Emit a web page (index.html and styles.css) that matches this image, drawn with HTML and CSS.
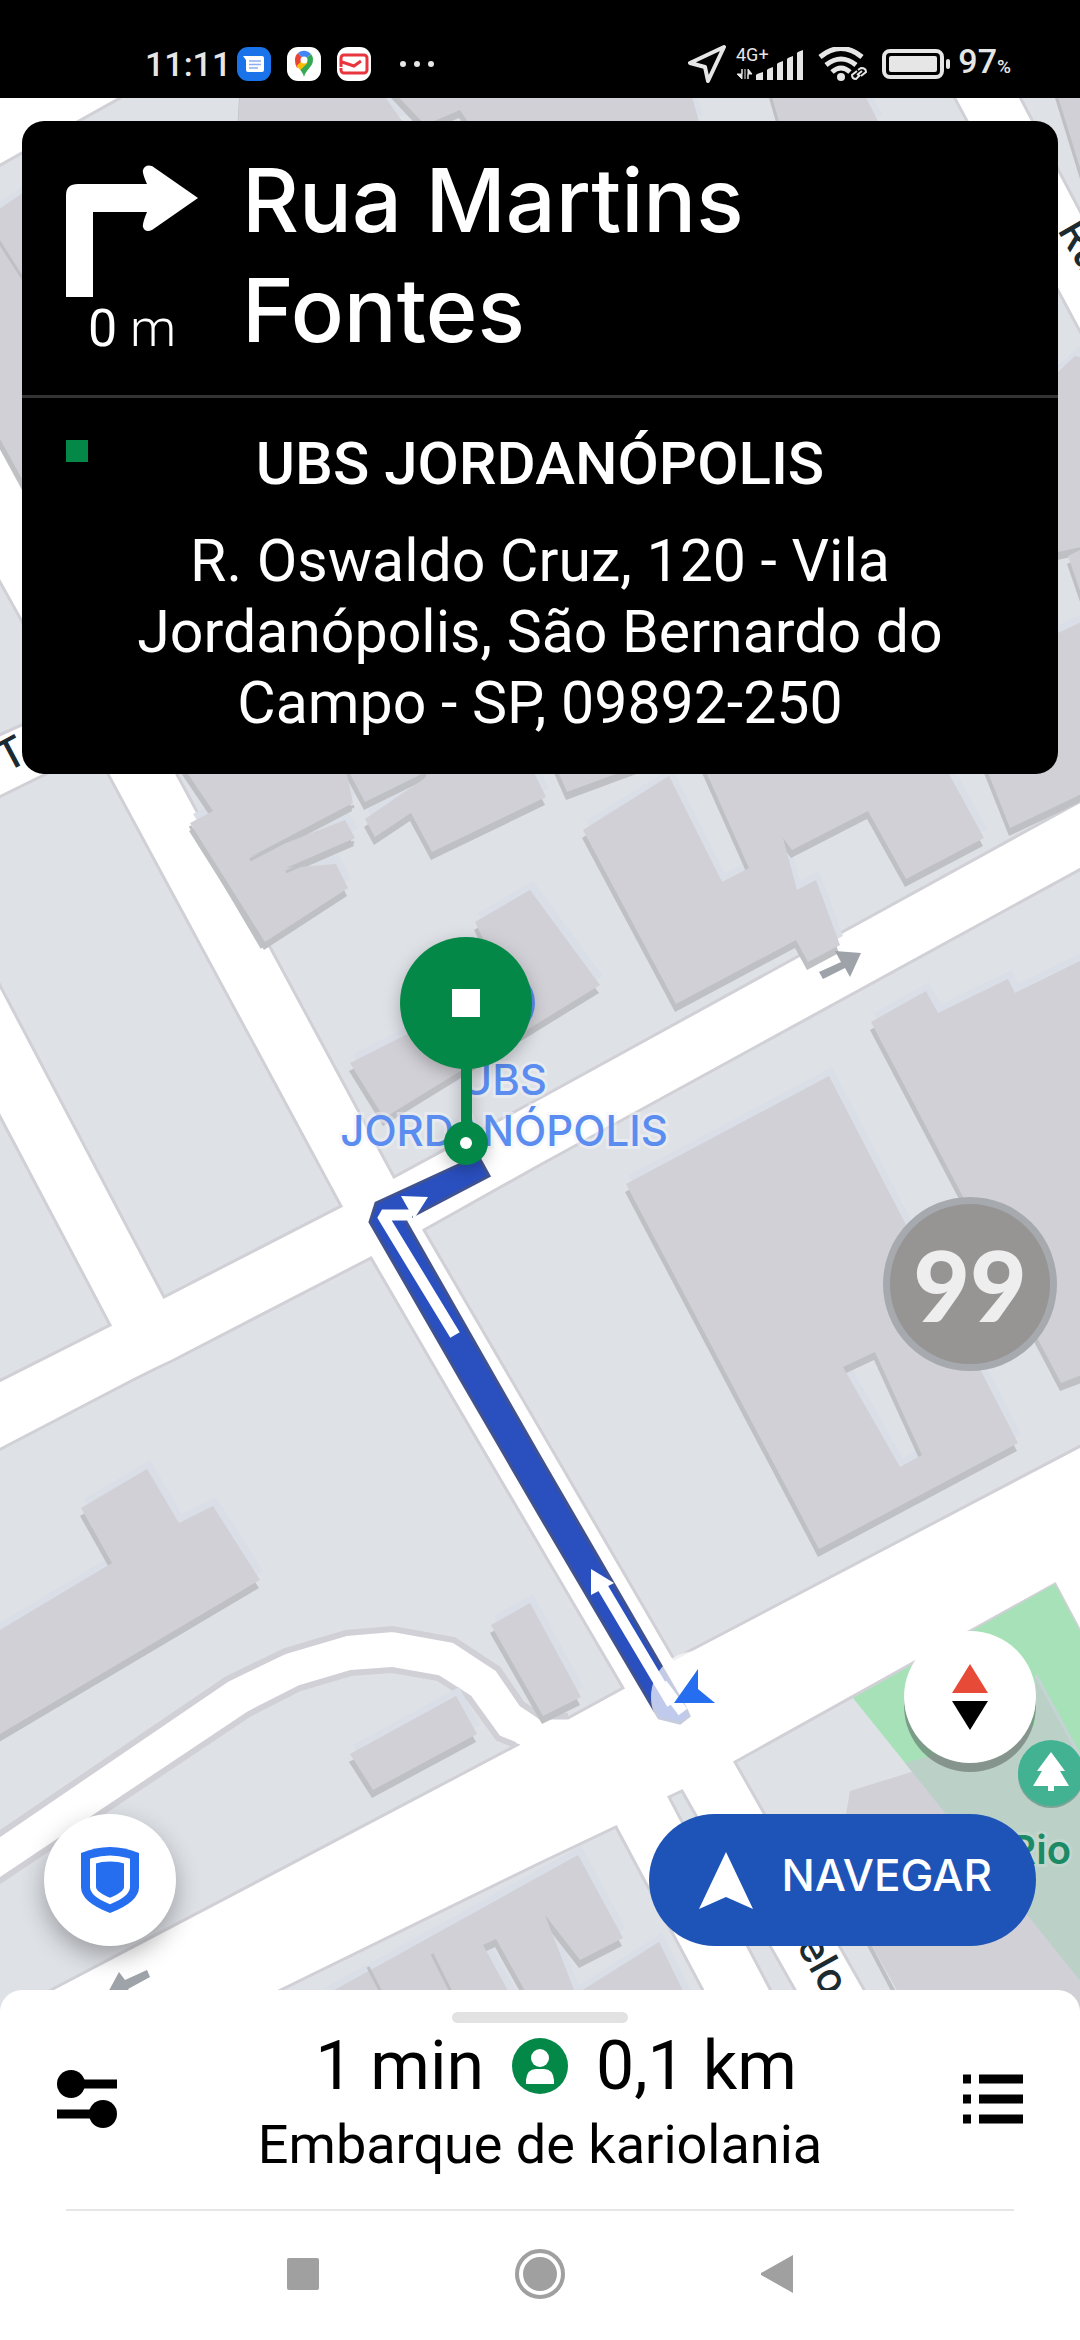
FILE: index.html
```html
<!DOCTYPE html>
<html lang="pt-BR">
<head>
    <meta charset="UTF-8">
    <meta name="viewport" content="width=device-width, initial-scale=1.0">
    <title>Navegação</title>
    <link rel="stylesheet" href="styles.css">
</head>
<body>

<header class="status-bar">
    <div class="status-group">
        <span class="clock">11:11</span>
        <svg class="app-icon" viewBox="0 0 34 34">
            <rect width="34" height="34" rx="11" fill="#1a73e8"/>
            <path d="M6 9h19a2 2 0 0 1 2 2v12a2 2 0 0 1-2 2H11a2 2 0 0 1-2-2V13z" fill="#fff"/>
            <path d="M12 14h12M12 17.500h12M12 21h9" stroke="#8ab0f0" stroke-width="1.500"/>
        </svg>
        <svg class="app-icon" viewBox="0 0 34 34">
            <rect width="34" height="34" rx="11" fill="#fff"/>
            <path d="M8 13a9 9 0 0 1 3-7l6 7-7 8a14 14 0 0 1-2-8z" fill="#ea4335"/>
            <path d="M11 6a9 9 0 0 1 13 1l-7 6z" fill="#4285f4"/>
            <path d="M24 7a9 9 0 0 1 2 6c0 7-7 9-9 17-1-4-3-6-5-9l5-8z" fill="#34a853"/>
            <path d="M9.500 19l7-7 4 4-7 7z" fill="#fbbc04"/>
            <circle cx="17" cy="13" r="3.500" fill="#fff"/>
        </svg>
        <svg class="app-icon" viewBox="0 0 34 34">
            <rect width="34" height="34" rx="11" fill="#fff"/>
            <path d="M4 20V11a3 3 0 0 1 3-3h20a3 3 0 0 1 3 3v12a3 3 0 0 1-3 3H7a3 3 0 0 1-3-3v-2M5 15l12 4 7-5" fill="none" stroke="#e8353e" stroke-width="3"/>
        </svg>
        <svg class="more-icon" viewBox="0 0 36 8">
            <circle cx="4" cy="4" r="3"/><circle cx="18" cy="4" r="3"/><circle cx="32" cy="4" r="3"/>
        </svg>
    </div>
    <div class="status-group">
        <svg class="location-icon" viewBox="0 0 38 38">
            <path d="M36 2L2 18l15 4 3 14z" fill="none" stroke="#e6e6e6" stroke-width="4" stroke-linejoin="round"/>
        </svg>
        <svg class="signal-icon" viewBox="0 0 68 34">
            <text x="0" y="14" class="network">4G+</text>
            <path d="M6 22v10l-5-5h5zM9 22v10M12 32V22l4 5h-4z" stroke="#e6e6e6"/>
            <path d="M20 33v-5q0-1 7-3v8zM31 33V23q0-1 6-3v13zM41 33V17q0-1 6-3v19zM51 33V12q0-1 6-3v24zM61 33V6q0-1 6-3v30z"/>
        </svg>
        <svg class="wifi-icon" viewBox="0 0 50 34">
            <path d="M2 10q21-17 42 0M8 18q15-12 30 0M14 25q9-8 18 0" fill="none" stroke="#e6e6e6" stroke-width="5"/>
            <circle cx="23" cy="30" r="4"/>
            <path d="M40 23l3-2q5 0 5 4l-5 4M42 28l-4 4q-4 0-4-4l5-4M39 28l5-4" fill="none" stroke="#000" stroke-width="5"/>
            <path d="M40 23l3-2q5 0 5 4l-5 4M42 28l-4 4q-4 0-4-4l5-4M39 28l5-4" fill="none" stroke="#e6e6e6" stroke-width="2"/>
        </svg>
        <svg class="battery-icon" viewBox="0 0 70 30">
            <rect x="2" y="2" width="58" height="26" rx="6" fill="none" stroke="#e6e6e6" stroke-width="4"/>
            <rect x="7" y="7" width="48" height="16" rx="2"/>
            <rect x="64" y="10" width="4" height="10" rx="2"/>
        </svg>
        <span class="battery-level">97<small>%</small></span>
    </div>
</header>

<main class="map">
    <svg class="map-canvas" viewBox="0 98 1080 1920" preserveAspectRatio="xMidYMin slice">
        <defs>
            <g id="roofs">
                <path d="M240 90L380 90 405 125 238 125zM392 90H690L700 125H470L460 110 425 125zM770 90H862L880 125H780z"/>
                <path d="M-5 212L30 188 60 300V548L-5 430z"/>
                <path d="M1056 90H1090V200z"/>
                <path d="M1040 360L1056 374 1075 356 1090 360V545L1040 556z"/>
                <path d="M1068 556L1090 545V620z"/>
                <path d="M1000 660L1090 618V780H1000z"/>
                <path d="M190 823L213 811 182 765H345L353 803 250 857 345 820 355 838 286 868 336 864 348 888 265 942z"/>
                <path d="M345 765L365 802 440 765z"/>
                <path d="M425 778L365 819 375 837 411 813 432 852 546 797 530 765H430z"/>
                <path d="M555 765L567 792 640 765z"/>
                <path d="M475 922L530 890 600 985 384 1118 350 1063 505 985z"/>
                <path d="M583 830L669 776 722 882 749 868 703 765H944L984 838 906 879 868 811 792 850 783 838 797 890 816 880 840 945 808 962 796 940 676 1004z"/>
                <path d="M985 765L1010 828 1090 790V765z"/>
                <path fill-rule="evenodd" d="M626 1184L829 1076 905 1223 1018 1443 819 1549zM843 1367L875 1352 922 1455 900 1467z"/>
                <path d="M871 1022L926 991 938 1013 1008 979 1015 993 1090 956V1372L1061 1383z"/>
                <path d="M81 1508L147 1469 179 1523 213 1506 260 1580-10 1740V1636L112 1563z"/>
                <path d="M491 1625L530 1603 581 1697 543 1716z"/>
                <path d="M350 1754L456 1696 477 1734 373 1790z"/>
                <path fill-rule="evenodd" d="M320 1998L578 1855 623 1938 580 1960 545 1915 578 2000zM483 1945L496 1939 530 2000H513z"/>
                <path d="M570 1998L659 1942 690 2005z"/>
            </g>
        </defs>

        <!-- city blocks -->
        <g class="block">
            <path d="M-5 168L120 98V80H945L1090 350V796L540 1098 394 1177-5 437z"/>
            <path d="M1011 80H1090V230z"/>
            <path d="M-5 573L68 704-5 737z"/>
            <path d="M-5 799L95 750 341 1206 164 1297-5 976z"/>
            <path d="M-5 1107L110 1325-5 1383z"/>
            <path d="M424 1230L540 1165 1090 864V1441L674 1659z"/>
            <path d="M735 1762L1055 1584 1090 1650V2030H887z"/>
            <path d="M669 1797L682 1791 815 2025H789z"/>
            <path d="M240 2010L540 1863 616 1827 715 2013z"/>
        </g>
        <path class="block" d="M-5 1452L133 1380 155 1369 172 1361 371 1258 442 1380 623 1688 568 1718H540L522 1704 498 1669 454 1640 393 1629 346 1633 285 1651 227 1679-5 1837z"/>
        <path class="block" d="M-5 1884L249 1714 300 1688 351 1673 392 1670 438 1678 469 1698 498 1738 517 1745 30 2001-5 2020z"/>
        <g class="kerb">
            <path d="M-5 1837L227 1679 285 1651 346 1633 393 1629 454 1640 498 1669 522 1704 540 1716H568"/>
            <path d="M-5 1884L249 1714 300 1688 351 1673 392 1670 438 1678 469 1698 498 1738 515 1745"/>
        </g>

        <!-- park -->
        <path d="M853 1698L1055 1584 1090 1650V1993z" fill="#a7e1b8"/>
        <path d="M850 1791L905 1774 1036 1736V1682L1090 1775V2010H908L835 1880z" fill="#d0d0d6"/>
        <path d="M905 1763L1036 1725V1675L1090 1775V1993z" fill="#bbd0c7"/>
        <path d="M1036 1675L1090 1775" stroke="#c6d3d4" stroke-width="3"/>
        <path d="M869 1945L897 1998" stroke="#bfc0c4" stroke-width="4"/>

        <!-- buildings -->
        <use href="#roofs" class="roof-lit" transform="translate(3 -9)"/>
        <use href="#roofs" class="roof-shade" transform="translate(-1 8)"/>
        <use href="#roofs" class="roof"/>
        <path d="M368 1967L384 1998M432 1954L454 1998M190 826L262 948M250 860L354 806M286 872L354 842M-2 240L30 290" fill="none" stroke="#bfc0c4" stroke-width="3"/>

        <!-- direction marks -->
        <g class="one-way">
            <path d="M819 972L841 962 835 951 861 953 850 977 845 968 823 979z"/>
            <path d="M147 1970L125 1980 119 1972 106 1996 135 1998 128 1989 150 1977z"/>
        </g>

        <!-- labels -->
        <g class="poi-label">
            <circle cx="502" cy="1003" r="33"/>
            <text x="504" y="1095">UBS</text>
            <text x="504" y="1146">JORDANÓPOLIS</text>
        </g>
        <text class="street-label" transform="translate(1057 230) rotate(60)">Rua</text>
        <text class="street-label" transform="translate(6 773) rotate(-28)">T</text>
        <text class="street-label" transform="translate(796 1945) rotate(61)">elo</text>
        <circle cx="1051" cy="1775" r="33" fill="#7fa396"/>
        <circle cx="1051" cy="1773" r="33" fill="#42b293"/>
        <path d="M1051 1752L1065 1771H1060L1069 1786H1054V1791H1048V1786H1033L1042 1771H1037z" fill="#fff"/>
        <text class="park-label" x="1071" y="1864">Rio</text>

        <!-- route -->
        <path class="route" d="M478 1156L376 1203 370 1222 461 1380 540 1516 659 1718 680 1723 689 1716 686 1709 540 1457 496 1380 405 1220 489 1176z"/>
        <path class="route-arrow" d="M455 1335L382 1215H412"/>
        <path d="M401 1196L428 1197 414 1219z" fill="#fff"/>
        <path class="route-arrow" d="M603 1588L672 1704"/>
        <path d="M591 1569L614 1583 591 1595z" fill="#fff"/>
        <circle cx="697" cy="1697" r="46" fill="#fff" opacity=".7"/>
        <path d="M662 1684L683 1712" fill="none" stroke="#fff" stroke-width="11"/>
        <path d="M698 1669V1689L715 1703H674z" fill="#266ef0"/>

        <!-- pickup pin -->
        <g class="pin">
            <circle cx="466" cy="1003" r="66"/>
            <rect x="461" y="1060" width="11" height="70"/>
            <circle cx="466" cy="1143" r="22"/>
            <rect x="452" y="989" width="28" height="28" fill="#fff"/>
            <circle cx="466" cy="1143" r="6" fill="#fff"/>
        </g>
    </svg>

    <section class="maneuver">
        <div class="turn">
            <div class="turn-step">
                <svg class="turn-icon" viewBox="0 0 132 132">
                    <path d="M0 132V30Q0 19 12 19H81Q76 8 77 5Q79-1 86 1L132 33 86 65Q79 68 77 62Q76 59 81 47H27V132z" fill="#fff"/>
                </svg>
                <span class="turn-distance"><b>0</b> m</span>
            </div>
            <h1>Rua Martins Fontes</h1>
        </div>
        <div class="stop">
            <span class="stop-mark"></span>
            <h2>UBS JORDANÓPOLIS</h2>
            <p>R. Oswaldo Cruz, 120 - Vila Jordanópolis, São Bernardo do Campo - SP, 09892-250</p>
        </div>
    </section>

    <button class="bubble" type="button" aria-label="99">99</button>

    <div class="map-controls">
        <button class="round-button compass" type="button" aria-label="Bússola">
            <svg viewBox="0 0 36 66">
                <path d="M18 0L36 29H0z" fill="#e74b37"/>
                <path d="M0 37H36L18 66z" fill="#000"/>
            </svg>
        </button>
        <div class="control-row">
            <button class="round-button safety" type="button" aria-label="Segurança">
                <svg viewBox="0 0 58 66">
                    <path d="M0 6Q29-6 58 6V40Q58 55 29 66Q0 55 0 40z" fill="#266ef0"/>
                    <path d="M12 14Q29 9 46 14V40Q46 47 29 54Q12 47 12 40z" fill="none" stroke="#fff" stroke-width="6"/>
                </svg>
            </button>
            <button class="navigate" type="button">
                <svg viewBox="0 0 54 57"><path d="M27 0L54 57 27 45 0 57z" fill="#fff"/></svg>
                <span>NAVEGAR</span>
            </button>
        </div>
    </div>
</main>

<footer class="sheet">
    <span class="handle"></span>
    <div class="trip">
        <button class="icon-button" type="button" aria-label="Preferências">
            <svg viewBox="0 0 60 60">
                <path d="M14 15H60M0 45H46" stroke="#000" stroke-width="9"/>
                <circle cx="14" cy="15" r="14"/><circle cx="46" cy="45" r="14"/>
            </svg>
        </button>
        <div class="trip-info">
            <div class="eta">
                <span class="eta-time">1 min</span>
                <svg viewBox="0 0 56 56">
                    <circle cx="28" cy="28" r="28" fill="#048848"/>
                    <circle cx="28" cy="20" r="9" fill="#fff"/>
                    <path d="M14 46V42Q15 31 24 31H32Q41 31 42 42V46z" fill="#fff"/>
                </svg>
                <span class="eta-distance">0,1 km</span>
            </div>
            <p>Embarque de kariolania</p>
        </div>
        <button class="icon-button" type="button" aria-label="Lista">
            <svg viewBox="0 0 60 60">
                <path d="M0 10H8M16 10H60M0 30H8M16 30H60M0 50H8M16 50H60" stroke="#000" stroke-width="9"/>
            </svg>
        </button>
    </div>
    <nav class="system-nav">
        <button type="button" aria-label="Recentes">
            <svg viewBox="0 0 66 66"><rect x="17" y="17" width="32" height="32" rx="2"/></svg>
        </button>
        <button type="button" aria-label="Início">
            <svg viewBox="0 0 66 66"><circle cx="33" cy="33" r="23" fill="none" stroke="#a0a0a0" stroke-width="4"/><circle cx="33" cy="33" r="17"/></svg>
        </button>
        <button type="button" aria-label="Voltar">
            <svg viewBox="0 0 66 66"><path d="M49 14V52L17 34V32z"/></svg>
        </button>
    </nav>
</footer>

</body>
</html>
```
FILE: styles.css
```css
* {
    box-sizing: border-box;
}
body {
    font-family: Roboto, 'Noto Sans', sans-serif;
    margin: 0;
    min-height: 100vh;
    display: flex;
    flex-direction: column;
    background: #fff;
    color: #000;
}
h1, h2, p {
    margin: 0;
}
button {
    border: none;
    padding: 0;
    background: none;
    font-family: inherit;
    cursor: pointer;
}
svg {
    display: block;
}

/* status bar */
.status-bar {
    display: flex;
    justify-content: space-between;
    height: 98px;
    padding: 30px 69px 0 145px;
    background: #000;
    color: #e6e6e6;
    fill: #e6e6e6;
}
.status-group {
    display: flex;
    align-items: center;
    gap: 14px;
}
.clock, .battery-level {
    font-size: 34px;
    font-weight: 500;
    line-height: 40px;
}
.battery-level small {
    font-size: 19px;
}
.clock {
    margin-right: -8px;
}
.app-icon {
    width: 34px;
    margin-right: 2px;
}
.more-icon {
    width: 36px;
    margin-left: 12px;
}
.location-icon {
    width: 38px;
    margin-right: -4px;
}
.signal-icon {
    width: 68px;
    overflow: visible;
}
.network {
    font-size: 18px;
}
.wifi-icon {
    width: 50px;
}
.battery-icon {
    width: 70px;
    margin-right: -8px;
}

/* map */
.map {
    position: relative;
    flex: 1;
    display: flex;
    flex-direction: column;
    justify-content: space-between;
    padding: 23px 22px 44px;
}
.map-canvas {
    position: absolute;
    top: 0;
    left: 0;
    width: 100%;
    height: calc(100% + 22px);
    background: #fff;
}
.block {
    fill: #dee1e6;
    stroke: #d0d0d6;
    stroke-width: 3;
}
.kerb {
    fill: none;
    stroke: #d0d0d6;
    stroke-width: 6;
}
.roof {
    fill: #d0d0d6;
}
.roof-lit {
    fill: #dadee7;
}
.roof-shade {
    fill: #bfc0c4;
}
.one-way {
    fill: #9da3a9;
}
.poi-label {
    fill: #5b8df0;
    font-family: Inter, sans-serif;
    font-size: 42px;
    font-weight: 500;
    text-anchor: middle;
}
.poi-label text, .park-label {
    stroke: rgba(240, 243, 246, 0.5);
    stroke-width: 6px;
    paint-order: stroke;
}
.street-label {
    fill: #1c2b30;
    font-family: Inter, sans-serif;
    font-size: 42px;
    font-weight: 500;
}
.park-label {
    fill: #1b8a65;
    stroke: #c3d6ce;
    font-family: Inter, sans-serif;
    font-size: 40px;
    font-weight: 600;
    text-anchor: end;
}
.route {
    fill: #2a4fbf;
    stroke: #41538f;
    stroke-width: 3;
}
.route-arrow {
    fill: none;
    stroke: #fff;
    stroke-width: 11;
    stroke-linejoin: bevel;
}
.pin {
    fill: #048848;
    filter: drop-shadow(0 5px 8px rgba(0, 0, 0, 0.25));
}

/* maneuver card */
.maneuver {
    position: relative;
    border-radius: 22px;
    background: #000;
    color: #fff;
}
.turn {
    display: flex;
    gap: 44px;
    padding: 24px 44px 30px;
    border-bottom: 3px solid #333;
}
.turn h1 {
    max-width: 600px;
    font-family: Inter, sans-serif;
    font-size: 88px;
    font-weight: 500;
    line-height: 110px;
}
.turn-step {
    width: 132px;
    padding-top: 20px;
    text-align: center;
}
.turn-icon {
    width: 132px;
}
.turn-distance {
    font-size: 52px;
    font-weight: 300;
    line-height: 64px;
}
.turn-distance b {
    font-weight: 400;
}
.stop {
    position: relative;
    padding: 30px 80px 36px;
    text-align: center;
}
.stop-mark {
    position: absolute;
    top: 42px;
    left: 44px;
    width: 22px;
    height: 22px;
    background: #048848;
}
.stop h2 {
    margin-bottom: 26px;
    font-size: 60px;
    font-weight: 500;
    line-height: 71px;
}
.stop p {
    font-size: 59px;
    font-weight: 400;
    line-height: 71px;
}

/* floating controls */
.bubble {
    position: absolute;
    top: 1099px;
    right: 23px;
    width: 174px;
    height: 174px;
    border: 7px solid #a6a9ae;
    border-radius: 50%;
    background: #979494;
    color: #eee;
    font-family: Lato, sans-serif;
    font-size: 98px;
    font-weight: 900;
    line-height: 100px;
}
.map-controls {
    position: relative;
    display: flex;
    flex-direction: column;
    align-items: flex-end;
    gap: 51px;
    padding: 0 22px;
}
.control-row {
    display: flex;
    justify-content: space-between;
    width: 100%;
}
.round-button {
    display: flex;
    align-items: center;
    justify-content: center;
    width: 132px;
    height: 132px;
    border-radius: 50%;
    background: #fff;
}
.compass {
    box-shadow: 0 9px 0 rgba(80, 90, 85, 0.5);
}
.compass svg {
    width: 36px;
}
.safety {
    box-shadow: 0 10px 24px rgba(0, 0, 0, 0.3);
}
.safety svg {
    width: 58px;
}
.navigate {
    display: flex;
    align-items: center;
    gap: 28px;
    height: 132px;
    padding: 0 44px 0 50px;
    border-radius: 66px;
    background: #1e54b7;
    color: #fff;
    font-family: Inter, sans-serif;
    font-size: 44px;
    font-weight: 500;
}
.navigate span {
    padding-bottom: 10px;
}
.navigate svg {
    width: 54px;
}

/* bottom sheet */
.sheet {
    position: relative;
    height: 350px;
    padding-top: 22px;
    border-radius: 22px 22px 0 0;
    background: #fff;
}
.handle {
    display: block;
    width: 176px;
    height: 11px;
    margin: 0 auto;
    border-radius: 6px;
    background: #e2e2e2;
}
.trip {
    display: flex;
    align-items: center;
    justify-content: space-between;
    height: 186px;
    margin: 0 57px;
    padding-bottom: 34px;
}
.trip-info {
    padding-top: 6px;
    text-align: center;
}
.eta {
    display: grid;
    grid-template-columns: 1fr 56px 1fr;
    align-items: center;
    gap: 28px;
    font-size: 68px;
    line-height: 80px;
}
.eta svg {
    width: 56px;
}
.eta-time {
    text-align: right;
}
.eta-distance {
    text-align: left;
}
.trip-info p {
    margin-top: 6px;
    font-size: 54px;
    font-weight: 400;
    line-height: 66px;
}
.icon-button svg {
    width: 60px;
}
.system-nav {
    display: flex;
    justify-content: space-between;
    margin: 0 66px;
    padding: 30px 204px 0;
    border-top: 2px solid #e6e6e6;
    fill: #a0a0a0;
}
.system-nav svg {
    width: 66px;
}
```
